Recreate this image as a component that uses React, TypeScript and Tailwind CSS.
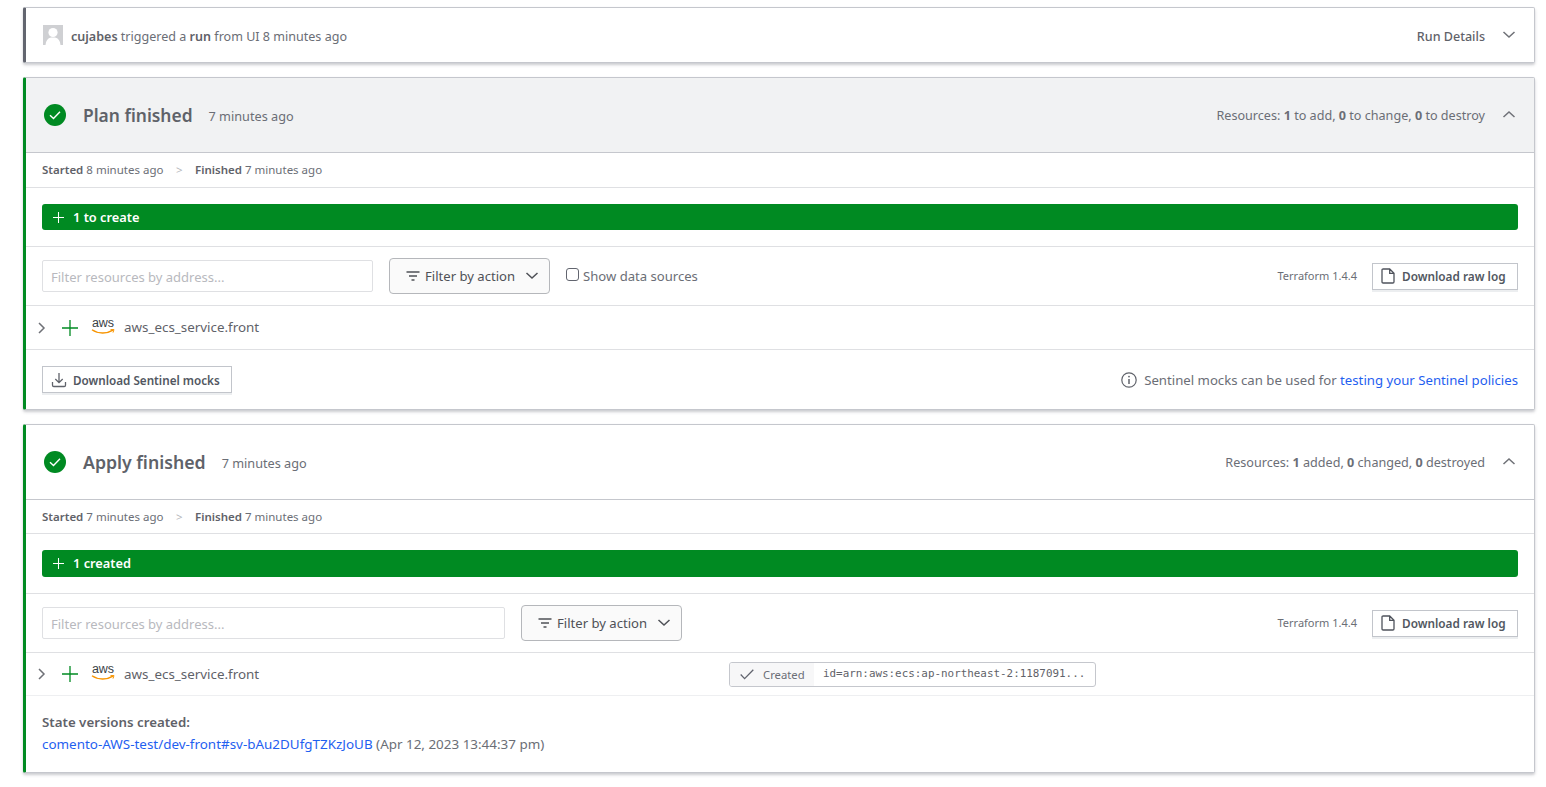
import React from "react";

const F = "font-['Noto_Sans','Open_Sans',sans-serif]";

function Chevron({ dir, className = "", color = "#6f7177" }: { dir: "up" | "down" | "right"; className?: string; color?: string }) {
  const d = dir === "up" ? "M1.5 8 L7 3 L12.5 8" : dir === "down" ? "M1.5 3 L7 8 L12.5 3" : "M3 1 L8 6 L3 11";
  return (
    <svg width="14" height="12" viewBox="0 0 14 12" fill="none" stroke={color} strokeWidth="1.5" className={className}>
      <path d={d} />
    </svg>
  );
}

function Check() {
  return (
    <svg width="22" height="22" viewBox="0 0 22 22" className="shrink-0">
      <circle cx="11" cy="11" r="11" fill="#008a22" />
      <path d="M6 11.3 L9.5 14.6 L16 7.8" fill="none" stroke="#fff" strokeWidth="1.4" />
    </svg>
  );
}

function Plus({ size = 12, color = "#fff", sw = 1.5 }: { size?: number; color?: string; sw?: number }) {
  return (
    <svg width={size} height={size} viewBox="0 0 16 16" fill="none" stroke={color} strokeWidth={sw} className="shrink-0">
      <path d="M8 0V16M0 8H16" />
    </svg>
  );
}

function Aws() {
  return (
    <span className="relative flex h-[22px] w-[26px] shrink-0 flex-col items-center">
      <span className="font-['Liberation_Sans',sans-serif] text-[12.5px] leading-[13px] text-[#3b3f46]">aws</span>
      <svg width="24" height="6" viewBox="0 0 24 6" fill="none" className="-mt-px">
        <path d="M1 0.8 C7 5 16 5 22 1.2" stroke="#f79400" strokeWidth="1.4" />
        <path d="M19.5 0.6 L23 0.6 L22 3.6" stroke="#f79400" strokeWidth="1" />
      </svg>
    </span>
  );
}

function FilterIcon() {
  return (
    <svg width="14" height="12" viewBox="0 0 14 12" fill="none" stroke="#4f5157" strokeWidth="1.4" className="shrink-0">
      <path d="M0.5 2H13.5M3 6H11M5.5 10H8.5" />
    </svg>
  );
}

function FileIcon() {
  return (
    <svg width="14" height="16" viewBox="0 0 14 16" fill="none" stroke="#4f535c" strokeWidth="1.3" className="shrink-0">
      <path d="M1 2.2 Q1 1 2.2 1 H8.7 L13 5.3 V13.8 Q13 15 11.8 15 H2.2 Q1 15 1 13.8 Z M8.7 1 V5.3 H13" />
    </svg>
  );
}

function DownloadIcon() {
  return (
    <svg width="16" height="16" viewBox="0 0 16 16" fill="none" stroke="#60636b" strokeWidth="1.3" className="shrink-0">
      <path d="M8 1V10.5M4.3 7L8 10.7L11.7 7M1.5 10V13.2Q1.5 14.5 2.8 14.5H13.2Q14.5 14.5 14.5 13.2V10" />
    </svg>
  );
}

function InfoIcon() {
  return (
    <svg width="16" height="16" viewBox="0 0 16 16" fill="none" stroke="#60636b" strokeWidth="1.2" className="mt-[2px] shrink-0">
      <circle cx="8" cy="8" r="7.2" />
      <path d="M8 7V12" strokeWidth="1.5" />
      <circle cx="8" cy="4.6" r="0.9" fill="#60636b" stroke="none" />
    </svg>
  );
}

function Avatar() {
  return (
    <span className="block size-5 shrink-0 overflow-hidden bg-[#cfd0d3]">
      <svg width="20" height="20" viewBox="0 0 20 20">
        <circle cx="10" cy="7.5" r="4.6" fill="#fff" />
        <path d="M2.5 20 Q3 13.5 8 12.5 H12 Q17 13.5 17.5 20 Z" fill="#fff" />
      </svg>
    </span>
  );
}

function RawLog() {
  return (
    <button className="flex h-[27px] w-[146px] items-center gap-[7px] border border-[#c2c5cb] bg-white pl-2 text-[11.8px] font-semibold text-[#525761] shadow-[0_2px_0_#eceef0]">
      <FileIcon />
      <span className="pt-[2px]">Download raw log</span>
    </button>
  );
}

function FilterBtn() {
  return (
    <button className="flex h-9 w-[161px] shrink-0 items-center rounded-[4px] border border-[#b5b7bb] bg-[#fafafa] pl-4 text-[13.1px] text-[#4f5157]">
      <FilterIcon />
      <span className="ml-[5px] pt-[2px]">Filter by action</span>
      <Chevron dir="down" color="#4f5157" className="ml-[10px]" />
    </button>
  );
}

function Card({ accent = "border-l-[#008a22]", children }: { accent?: string; children: React.ReactNode }) {
  return (
    <section className={`rounded-[2px] border border-l-[3px] border-[#c5c7cd] ${accent} bg-white shadow-[0_2px_3px_rgba(80,84,96,0.3)]`}>
      {children}
    </section>
  );
}

function Phase({ title, ago, summary, gray }: { title: string; ago: string; summary: React.ReactNode; gray?: boolean }) {
  return (
    <div className={`flex h-[75px] items-center border-b border-[#c5c7cd] pl-[18px] pr-[18px] ${gray ? "bg-[#f1f2f3]" : ""}`}>
      <Check />
      <h2 className={`ml-[17px] ${gray ? "text-[17.4px]" : "text-[17.7px]"} font-semibold text-[#5f6269]`}>{title}</h2>
      <span className="ml-[16px] pt-[3px] text-[12.7px] text-[#6b6e76]">{ago}</span>
      <span className="ml-auto pt-[3px] text-[12.6px] text-[#6b6e76]">{summary}</span>
      <Chevron dir="up" className="ml-[17px] -mt-[1px]" />
    </div>
  );
}

function Times({ started }: { started: string }) {
  return (
    <div className="flex items-center border-b border-[#dfe0e3] pl-4 text-[11.5px] text-[#6b6e76]">
      <span><b className="font-semibold text-[#5f6269]">Started</b> {started}</span>
      <span className="mx-[12.5px] text-[#b5b7bb]">&gt;</span>
      <span><b className="font-semibold text-[#5f6269]">Finished</b> 7 minutes ago</span>
    </div>
  );
}

function Bar({ label, tall }: { label: string; tall?: boolean }) {
  return (
    <div className="border-b border-[#dfe0e3] px-4 pb-4 pt-4">
      <div className={`flex ${tall ? "h-[27px]" : "h-[26px]"} items-center gap-[9px] rounded-[3px] bg-[#008a22] pl-[11px] text-[12.8px] font-semibold text-white`}>
        <Plus size={11} />
        <span className="pt-[1px]">{label}</span>
      </div>
    </div>
  );
}

function Input({ w }: { w: string }) {
  return (
    <input
      readOnly
      placeholder="Filter resources by address..."
      className={`h-8 ${w} shrink-0 rounded-[2px] border border-[#dfe0e3] bg-white px-2 pt-[2px] text-[13px] placeholder:text-[#b8b9be]`}
    />
  );
}

function Resource({ children }: { children?: React.ReactNode }) {
  return (
    <div className="flex items-center pl-[10px] text-[13.4px] text-[#5f6269]">
      <Chevron dir="right" />
      <span className="ml-[12px]"><Plus size={16} color="#008a22" sw={1.3} /></span>
      <span className="ml-[12px]"><Aws /></span>
      <span className="ml-[8px] w-[605px]">aws_ecs_service.front</span>
      {children}
    </div>
  );
}

export default function App() {
  return (
    <main className={`${F} flex min-h-[787px] flex-col gap-[14px] bg-white pb-[14px] pl-[23px] pr-[11px] pt-[7px] text-[#5f6269]`}>
      <Card accent="border-l-[#62656f]">
        <div className="flex h-[54px] items-center pl-[17px] pr-[18px] text-[12.55px] text-[#6b6e76]">
          <Avatar />
          <span className="ml-2 pt-[4px]"><b className="font-semibold text-[#5f6269]">cujabes</b> triggered a <b className="font-semibold text-[#5f6269]">run</b> from UI 8 minutes ago</span>
          <span className="ml-auto pt-[4px] font-medium text-[#5f6269]">Run Details</span>
          <Chevron dir="down" className="ml-[17px] -mt-[1px]" />
        </div>
      </Card>

      <Card>
        <Phase
          gray
          title="Plan finished"
          ago="7 minutes ago"
          summary={<>Resources: <b className="font-bold">1</b> to add, <b className="font-bold">0</b> to change, <b className="font-bold">0</b> to destroy</>}
        />
        <div className="grid h-[35px]"><Times started="8 minutes ago" /></div>
        <Bar label="1 to create" />
        <div className="flex h-[59px] items-center border-b border-[#dfe0e3] pl-4 pr-4">
          <Input w="w-[331px]" />
          <span className="ml-4"><FilterBtn /></span>
          <label className="ml-4 flex items-center gap-1 text-[13.1px] text-[#6b6e76]">
            <span className="mb-[3px] block size-[13px] rounded-[3px] border border-[#62656f] bg-white" />
            <span className="pt-[1px]">Show data sources</span>
          </label>
          <span className="ml-auto text-[11px] text-[#6b6e76]">Terraform 1.4.4</span>
          <span className="ml-[15px]"><RawLog /></span>
        </div>
        <div className="grid h-[44px] border-b border-[#dfe0e3]"><Resource /></div>
        <div className="flex h-[59px] items-center px-4">
          <button className="flex h-[27px] w-[190px] items-center gap-[6px] border border-[#c2c5cb] bg-white pl-2 text-[11.7px] font-semibold text-[#525761] shadow-[0_2px_0_#eceef0]">
            <DownloadIcon />
            <span className="pt-[2px]">Download Sentinel mocks</span>
          </button>
          <span className="ml-auto flex items-center gap-[7px] text-[13.2px] text-[#6b6e76]">
            <InfoIcon />
            <span className="pt-[3px]">Sentinel mocks can be used for <a className="text-[#1f60f0]">testing your Sentinel policies</a></span>
          </span>
        </div>
      </Card>

      <Card>
        <Phase
          title="Apply finished"
          ago="7 minutes ago"
          summary={<>Resources: <b className="font-bold">1</b> added, <b className="font-bold">0</b> changed, <b className="font-bold">0</b> destroyed</>}
        />
        <div className="grid h-[34px]"><Times started="7 minutes ago" /></div>
        <Bar label="1 created" tall />
        <div className="flex h-[59px] items-center border-b border-[#dfe0e3] pl-4 pr-4">
          <Input w="w-[463px]" />
          <span className="ml-4"><FilterBtn /></span>
          <span className="ml-auto text-[11px] text-[#6b6e76]">Terraform 1.4.4</span>
          <span className="ml-[15px]"><RawLog /></span>
        </div>
        <div className="grid h-[43px] border-b border-[#eeeff1]">
          <Resource>
            <span className="flex h-[25px] w-[367px] items-center overflow-hidden rounded-[3px] border border-[#c5c7cd]">
              <span className="flex h-full w-[84px] shrink-0 items-center gap-[9px] bg-[#f7f7f8] pl-[10px] text-[11.3px] text-[#6b6e76]">
                <svg width="14" height="11" viewBox="0 0 14 11" fill="none" stroke="#62656f" strokeWidth="1.3"><path d="M0.7 5.5L4.6 9.6L13.3 0.8" /></svg>
                <span className="pt-[2px]">Created</span>
              </span>
              <span className="ml-[9px] whitespace-nowrap pt-[1px] font-['DejaVu_Sans_Mono',monospace] text-[10.9px] text-[#5f6269]">id=arn:aws:ecs:ap-northeast-2:1187091...</span>
            </span>
          </Resource>
        </div>
        <div className="flex h-[76px] flex-col gap-[1px] pl-4 pt-[17px] text-[13.43px] text-[#6b6e76]">
          <b className="text-[13.3px] font-semibold text-[#5f6269]">State versions created:</b>
          <span><a className="text-[#1f60f0]">comento-AWS-test/dev-front#sv-bAu2DUfgTZKzJoUB</a> (Apr 12, 2023 13:44:37 pm)</span>
        </div>
      </Card>
    </main>
  );
}
